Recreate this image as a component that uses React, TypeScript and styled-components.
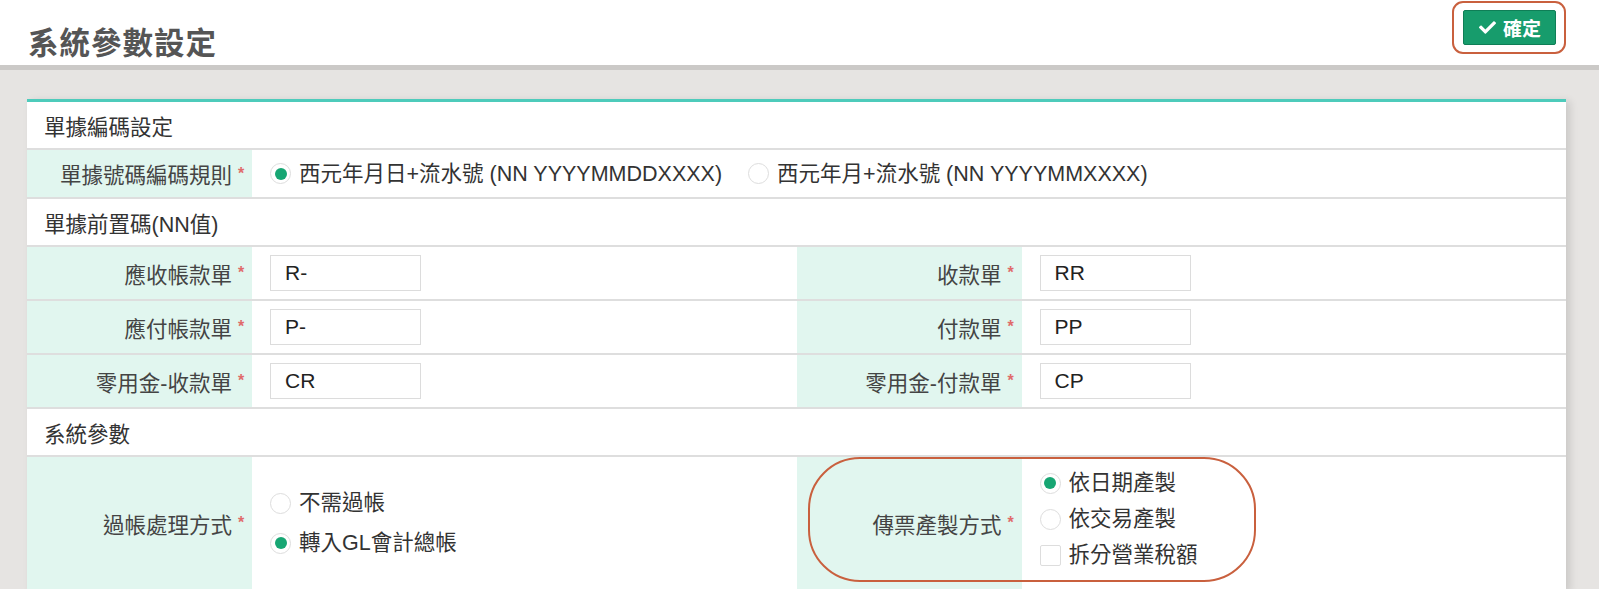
import React from 'react';
import styled, { createGlobalStyle } from 'styled-components';
import { FaCheck } from 'react-icons/fa';

const GlobalStyle = createGlobalStyle`
  html, body {
    margin: 0;
    padding: 0;
    background: #e6e4e2;
  }
  body {
    font-family: "Liberation Sans", "Noto Sans CJK TC", sans-serif;
    color: #333;
  }
`;

const Page = styled.div`
  width: 1599px;
  min-height: 589px;
  overflow: hidden;
`;

const Header = styled.header`
  height: 65px;
  background: #fff;
  display: flex;
  align-items: flex-start;
  justify-content: space-between;
  padding: 0 43px 0 28px;
  border-bottom: 5px solid #cbc9c7;
`;

const Title = styled.h1`
  margin: 19px 0 0;
  font-family: "Noto Sans CJK TC", sans-serif;
  font-size: 30.5px;
  font-weight: 700;
  color: #555;
  letter-spacing: 1px;
`;

const ButtonWrap = styled.div`
  position: relative;
  margin-top: 10px;
`;

const ConfirmButton = styled.button`
  display: flex;
  align-items: center;
  gap: 7px;
  height: 35px;
  padding: 0 14px 0 15px;
  background: #179c6c;
  border: 1px solid #0f7e56;
  border-radius: 2px;
  color: #fff;
  font-family: "Noto Sans CJK TC", sans-serif;
  font-size: 19px;
  font-weight: 700;
  cursor: pointer;
`;

const Annotation = styled.div<{ $radius: number }>`
  position: absolute;
  border: 2.5px solid #c9603e;
  border-radius: ${(p) => p.$radius}px;
  pointer-events: none;
`;

const Main = styled.main`
  padding: 29px 33px 0 27px;
`;

const Card = styled.section`
  background: #fff;
  border-top: 3px solid #4ecbbb;
  box-shadow: 4px 2px 8px rgba(0, 0, 0, 0.12);
`;

const SectionHeader = styled.div`
  height: 46px;
  display: flex;
  align-items: center;
  padding-left: 17px;
  font-size: 21.5px;
  color: #333;
  border-bottom: 2px solid #dedede;
`;

const FormRow = styled.div<{ $height: number }>`
  display: grid;
  grid-template-columns: 225px 1fr 225px 1fr;
  min-height: ${(p) => p.$height}px;
  border-bottom: 2px solid #dedede;
`;

const LabelCell = styled.div`
  position: relative;
  background: #e1f6ef;
  display: flex;
  align-items: center;
  justify-content: flex-end;
  padding-right: 4px;
  font-size: 21.5px;
  color: #444;
`;

const Required = styled.span`
  color: #e06b6b;
  font-size: 16px;
  font-weight: 700;
  margin-left: 6px;
  width: 10px;
`;

const ValueCell = styled.div<{ $span?: number; $top?: number }>`
  grid-column: span ${(p) => p.$span ?? 1};
  display: flex;
  align-items: ${(p) => (p.$top !== undefined ? 'flex-start' : 'center')};
  padding-top: ${(p) => p.$top ?? 0}px;
  padding-left: 18px;
  font-size: 21.5px;
  color: #333;
`;

const TextInput = styled.input`
  width: 151px;
  height: 36px;
  box-sizing: border-box;
  border: 1px solid #dcdcdc;
  padding: 0 14px;
  font-family: "Liberation Sans", sans-serif;
  font-size: 21px;
  color: #222;
  outline: none;
`;

const InlineOptions = styled.div`
  display: flex;
  align-items: center;
  gap: 26px;
`;

const StackOptions = styled.div<{ $gap: number }>`
  display: flex;
  flex-direction: column;
  gap: ${(p) => p.$gap}px;
`;

const Option = styled.label`
  display: flex;
  align-items: center;
  gap: 8px;
  font-size: 21.5px;
  color: #333;
  line-height: 28px;
`;

const RadioCircle = styled.span<{ $checked?: boolean }>`
  width: 21px;
  height: 21px;
  box-sizing: border-box;
  border-radius: 50%;
  border: 1px solid #dddddd;
  background: #fff;
  display: flex;
  align-items: center;
  justify-content: center;
  &::after {
    content: '';
    width: 12px;
    height: 12px;
    border-radius: 50%;
    background: ${(p) => (p.$checked ? '#17a673' : 'transparent')};
  }
`;

const CheckBox = styled.span`
  width: 21px;
  height: 21px;
  box-sizing: border-box;
  border: 1px solid #dddddd;
  border-radius: 2px;
  background: #fff;
`;

const Radio = ({ checked, children }: { checked?: boolean; children: React.ReactNode }) => (
  <Option>
    <RadioCircle $checked={checked} />
    {children}
  </Option>
);

const Label = ({ children }: { children: React.ReactNode }) => (
  <LabelCell>
    {children}
    <Required>*</Required>
  </LabelCell>
);

const prefixRows = [
  ['應收帳款單', 'R-', '收款單', 'RR'],
  ['應付帳款單', 'P-', '付款單', 'PP'],
  ['零用金-收款單', 'CR', '零用金-付款單', 'CP'],
];

export default function App() {
  return (
    <Page>
      <GlobalStyle />
      <Header>
        <Title>系統參數設定</Title>
        <ButtonWrap>
          <ConfirmButton>
            <FaCheck size={17} />
            確定
          </ConfirmButton>
          <Annotation $radius={11} style={{ left: -11, top: -9, right: -10, bottom: -9 }} />
        </ButtonWrap>
      </Header>
      <Main>
        <Card>
          <SectionHeader>單據編碼設定</SectionHeader>
          <FormRow $height={47}>
            <Label>單據號碼編碼規則</Label>
            <ValueCell $span={3}>
              <InlineOptions>
                <Radio checked>西元年月日+流水號 (NN YYYYMMDDXXXX)</Radio>
                <Radio>西元年月+流水號 (NN YYYYMMXXXX)</Radio>
              </InlineOptions>
            </ValueCell>
          </FormRow>
          <SectionHeader>單據前置碼(NN值)</SectionHeader>
          {prefixRows.map(([l1, v1, l2, v2]) => (
            <FormRow $height={52} key={l1}>
              <Label>{l1}</Label>
              <ValueCell>
                <TextInput defaultValue={v1} />
              </ValueCell>
              <Label>{l2}</Label>
              <ValueCell>
                <TextInput defaultValue={v2} />
              </ValueCell>
            </FormRow>
          ))}
          <SectionHeader>系統參數</SectionHeader>
          <FormRow $height={132}>
            <Label>過帳處理方式</Label>
            <ValueCell>
              <StackOptions $gap={12}>
                <Radio>不需過帳</Radio>
                <Radio checked>轉入GL會計總帳</Radio>
              </StackOptions>
            </ValueCell>
            <LabelCell>
              傳票產製方式
              <Required>*</Required>
              <Annotation $radius={52} style={{ left: 11, top: 0, width: 444, height: 121 }} />
            </LabelCell>
            <ValueCell $top={12}>
              <StackOptions $gap={8}>
                <Radio checked>依日期產製</Radio>
                <Radio>依交易產製</Radio>
                <Option>
                  <CheckBox />
                  拆分營業稅額
                </Option>
              </StackOptions>
            </ValueCell>
          </FormRow>
        </Card>
      </Main>
    </Page>
  );
}
